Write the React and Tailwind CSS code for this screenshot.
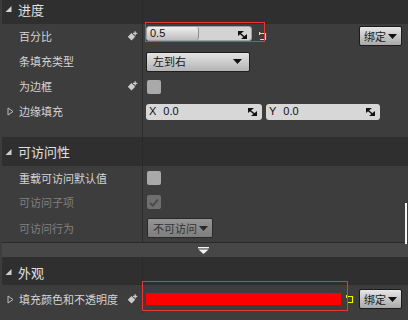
import React from "react";

const CJK = "font-['Noto_Sans_CJK_SC','Noto_Sans',sans-serif]";

function HeaderTri() {
  return (
    <svg width="7" height="6" viewBox="0 0 7 6" className="shrink-0">
      <polygon points="6.5,0 6.5,6 0.5,6" fill="#cfcfcf" />
    </svg>
  );
}

function ExpandTri() {
  return (
    <svg width="7" height="9" viewBox="0 0 7 9" className="shrink-0">
      <polygon points="1,1 6,4.5 1,8" fill="none" stroke="#bdbdbd" strokeWidth="1" />
    </svg>
  );
}

function Pin() {
  return (
    <svg width="11" height="11" viewBox="0 0 11 11" className="shrink-0">
      <polygon points="4.5,2 8.2,5.7 4.5,9.4 0.8,5.7" fill="#cccccc" />
      <rect x="7.5" y="0.3" width="1.3" height="4.2" fill="#cccccc" />
      <rect x="6" y="1.8" width="4.3" height="1.3" fill="#cccccc" />
    </svg>
  );
}

function Corner() {
  return (
    <svg width="9" height="8" viewBox="0 0 9 8" className="shrink-0">
      <polygon points="0,0 6,0 0,5" fill="#111" />
      <polygon points="9,8 3,8 9,3" fill="#111" />
      <polygon points="1.5,1 8,6.5 7,7.5 0.5,2" fill="#111" />
    </svg>
  );
}

function DownTri({ color = "#111" }) {
  return (
    <svg width="9" height="5" viewBox="0 0 9 5" className="shrink-0">
      <polygon points="0,0 9,0 4.5,5" fill={color} />
    </svg>
  );
}

function Yellow() {
  return (
    <svg width="8" height="9" viewBox="0 0 8 9" className="shrink-0">
      <path d="M1 1.5 H6.5 V7.5 H1" fill="none" stroke="#f2f200" strokeWidth="1.2" />
      <rect x="0" y="0" width="1.2" height="3" fill="#f2f200" />
    </svg>
  );
}

function Header({ title, h = "h-[29px]", extra = "" }) {
  return (
    <div className={`flex ml-[2px] bg-[#2f2f2f] shrink-0 ${h}`}>
      <div className={`w-[141px] border-r border-[#292929] flex items-center pl-[3px] gap-[6px] ${extra}`}>
        <HeaderTri />
        <span className={`${CJK} text-[13px] leading-none text-[#e0e0e0]`}>{title}</span>
      </div>
      <div className="flex-1" />
    </div>
  );
}

function Row({ label, h = "h-[25px]", expand, pin, disabled, children, right = "items-center" }) {
  return (
    <div className={`flex shrink-0 ${h}`}>
      <div className="w-[143px] border-r border-[#2b2b2b] flex items-center">
        <div className="w-[19px] flex justify-center pl-[2px]">{expand ? <ExpandTri /> : null}</div>
        <span
          className={`${CJK} flex-1 text-[11px] leading-none ${
            disabled ? "text-[#808080]" : "text-[#d4d4d4]"
          }`}
        >
          {label}
        </span>
        <div className="w-[15px] flex">{pin ? <Pin /> : null}</div>
      </div>
      <div className={`flex-1 flex ${right} pl-[3px] pr-[6px]`}>{children}</div>
    </div>
  );
}

function BindBtn() {
  return (
    <div className="ml-auto w-[43px] h-[20px] rounded-[2px] border border-[#1c1c1c] bg-gradient-to-b from-[#e6e6e6] to-[#a9a9a9] flex items-center justify-center gap-[2px]">
      <span className={`${CJK} text-[11px] leading-none text-[#1a1a1a]`}>绑定</span>
      <DownTri />
    </div>
  );
}

export default function App() {
  return (
    <div className="relative w-[408px] h-[320px] overflow-hidden bg-[#3d3d3d] flex flex-col">
      {/* Section 1 */}
      <div className="mt-[-5px]">
        <Header title="进度" extra="pb-[1px]" />
      </div>
      <Row label="百分比" pin right="items-start pt-[2px]">
        <div className="w-[106px] h-[15px] rounded-[3px] bg-[#d3d3d3] flex items-center relative border border-[#a0a0a0]">
          <div className="absolute left-0 top-0 bottom-0 w-[52px] rounded-[3px] bg-gradient-to-b from-[#f0f0f0] to-[#bdbdbd] border-r border-[#8e8e8e]" />
          <span className="relative pl-[3px] font-['Liberation_Sans',sans-serif] text-[11px] leading-none text-[#111]">0.5</span>
          <div className="relative ml-auto mr-[4px] mt-[3px]">
            <Corner />
          </div>
        </div>
        <div className="ml-[7px] mt-[6px]">
          <Yellow />
        </div>
        <div className="ml-auto">
          <BindBtn />
        </div>
      </Row>
      <Row label="条填充类型">
        <div className="w-[104px] h-[20px] rounded-[2px] border border-[#1e1e1e] bg-gradient-to-b from-[#e4e4e4] to-[#b4b4b4] flex items-center pl-[6px] pr-[7px]">
          <span className={`${CJK} text-[11px] leading-none text-[#151515]`}>左到右</span>
          <div className="ml-auto">
            <DownTri />
          </div>
        </div>
      </Row>
      <Row label="为边框" pin>
        <div className="ml-[1px] w-[14px] h-[14px] rounded-[2px] bg-[#a9a9a9]" />
      </Row>
      <Row label="边缘填充" expand>
        <div className="flex gap-[4px]">
          <div className="w-[116px] h-[16px] rounded-[3px] bg-[#d7d7d7] flex items-center pl-[3px] pr-[5px]">
            <span className="font-['Liberation_Sans',sans-serif] text-[11px] leading-none text-[#111]">X</span>
            <span className="ml-[7px] font-['Liberation_Sans',sans-serif] text-[11px] leading-none text-[#111]">0.0</span>
            <div className="ml-auto">
              <Corner />
            </div>
          </div>
          <div className="w-[114px] h-[16px] rounded-[3px] bg-[#d7d7d7] flex items-center pl-[3px] pr-[5px]">
            <span className="font-['Liberation_Sans',sans-serif] text-[11px] leading-none text-[#111]">Y</span>
            <span className="ml-[7px] font-['Liberation_Sans',sans-serif] text-[11px] leading-none text-[#111]">0.0</span>
            <div className="ml-auto">
              <Corner />
            </div>
          </div>
        </div>
      </Row>
      <Row label="" h="h-[13px]" />

      {/* Section 2 */}
      <Header title="可访问性" />
      <Row label="重载可访问默认值" h="h-[24px]">
        <div className="ml-[1px] w-[14px] h-[14px] rounded-[2px] bg-[#a9a9a9]" />
      </Row>
      <Row label="可访问子项" h="h-[24px]" disabled>
        <div className="ml-[1px] w-[14px] h-[14px] rounded-[2px] bg-[#6f6f6f] flex items-center justify-center">
          <svg width="10" height="9" viewBox="0 0 10 9">
            <path d="M1 5 L3.8 7.6 L9 1.5" fill="none" stroke="#4c4c4c" strokeWidth="2" />
          </svg>
        </div>
      </Row>
      <Row label="可访问行为" h="h-[28px]" disabled>
        <div className="ml-[1px] w-[66px] h-[20px] rounded-[2px] border border-[#2a2a2a] bg-gradient-to-b from-[#959595] to-[#7e7e7e] flex items-center pl-[5px] pr-[4px]">
          <span className={`${CJK} text-[11px] leading-none text-[#333]`}>不可访问</span>
          <div className="ml-auto">
            <DownTri color="#2a2a2a" />
          </div>
        </div>
      </Row>
      <div className="h-[15px] shrink-0 border-t border-[#2a2a2a] ml-[2px] bg-[#474747] flex items-center justify-center pr-[4px]">
        <svg width="11" height="7" viewBox="0 0 11 7">
          <rect x="0" y="0" width="11" height="1.4" fill="#f4f4f4" />
          <polygon points="0.5,2.5 10.5,2.5 5.5,7" fill="#f4f4f4" />
        </svg>
      </div>

      {/* Section 3 */}
      <Header title="外观" h="h-[28px]" extra="pt-[2px]" />
      <Row label="填充颜色和不透明度" expand pin h="h-[28px]">
        <div className="w-[195px] h-[12px] bg-[#ff0000]" />
        <div className="ml-[5px]">
          <Yellow />
        </div>
        <div className="ml-auto">
          <BindBtn />
        </div>
      </Row>

      {/* overlays: widget reflector outlines */}
      <div className="absolute left-[145px] top-[22px] w-[120px] h-[20px] border border-[#e23a3a] pointer-events-none" />
      <div className="absolute left-[142px] top-[281px] w-[206px] h-[30px] border border-[#e23a3a] pointer-events-none" />
      <div className="absolute left-[405px] top-[203px] w-[2px] h-[41px] bg-[#f2f2f2]" />
    </div>
  );
}
